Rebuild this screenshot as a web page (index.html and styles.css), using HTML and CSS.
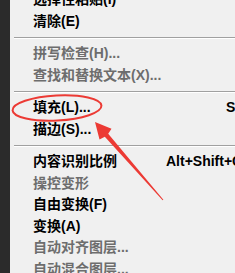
FILE: index.html
```html
<!DOCTYPE html>
<html lang="zh-CN">
<head>
<meta charset="utf-8">
<title>编辑菜单</title>
<link rel="stylesheet" href="styles.css">
</head>
<body>
<div class="screen">
  <div class="strip"></div>
  <div class="menu">
    <div class="item">选择性粘贴(I)</div>
    <div class="item">清除(E)</div>
    <div class="sep"></div>
    <div class="item dis">拼写检查(H)...</div>
    <div class="item dis">查找和替换文本(X)...</div>
    <div class="sep"></div>
    <div class="item"><span class="label">填充(L)...</span><span class="key late">Shift+F5</span></div>
    <div class="item">描边(S)...</div>
    <div class="sep"></div>
    <div class="item"><span class="label">内容识别比例</span><span class="key">Alt+Shift+Ctrl+C</span></div>
    <div class="item dis">操控变形</div>
    <div class="item">自由变换(F)</div>
    <div class="item">变换(A)</div>
    <div class="item dis">自动对齐图层...</div>
    <div class="item dis">自动混合图层...</div>
  </div>
  <svg class="annot" width="235" height="273" viewBox="0 0 235 273">
    <ellipse cx="57" cy="108" rx="44.5" ry="12.5" transform="rotate(-3 57 108)" fill="none" stroke="#ec3a34" stroke-width="2"/>
    <polygon points="95,122 99.5,139.4 104.8,136.7 162.6,200.3 163.4,199.7 108.2,133.8 111.5,128.8" fill="#ec3a34"/>
  </svg>
</div>
</body>
</html>
```

FILE: styles.css
```css
html, body {
  margin: 0;
  padding: 0;
  background: #f0f0f0;
}

.screen {
  position: relative;
  display: flex;
  width: 235px;
  height: 273px;
  overflow: hidden;
  background: #f0f0f0;
}

.strip {
  flex: none;
  width: 10px;
  background: #2b2b2b;
}

.menu {
  flex: 1;
  display: flex;
  flex-direction: column;
  margin-top: -11px;
  min-width: 0;
}

.item {
  flex: none;
  display: grid;
  grid-template-columns: 133px max-content;
  height: 21.5px;
  line-height: 21.5px;
  padding-left: 23px;
  font-family: "Liberation Sans", "Noto Sans CJK SC", sans-serif;
  font-weight: 700;
  font-size: 14px;
  color: #000;
  white-space: nowrap;
}

.item.dis {
  color: #6d6d6d;
}

.label {
  white-space: nowrap;
}

.key {
  white-space: nowrap;
}

.key.late {
  margin-left: 60px;
}

.sep {
  flex: none;
  height: 1px;
  margin: 5px 0 4px 4px;
  background: #a0a0a0;
  border-bottom: 1px solid #ffffff;
}

.annot {
  position: absolute;
  left: 0;
  top: 0;
  pointer-events: none;
}
```
